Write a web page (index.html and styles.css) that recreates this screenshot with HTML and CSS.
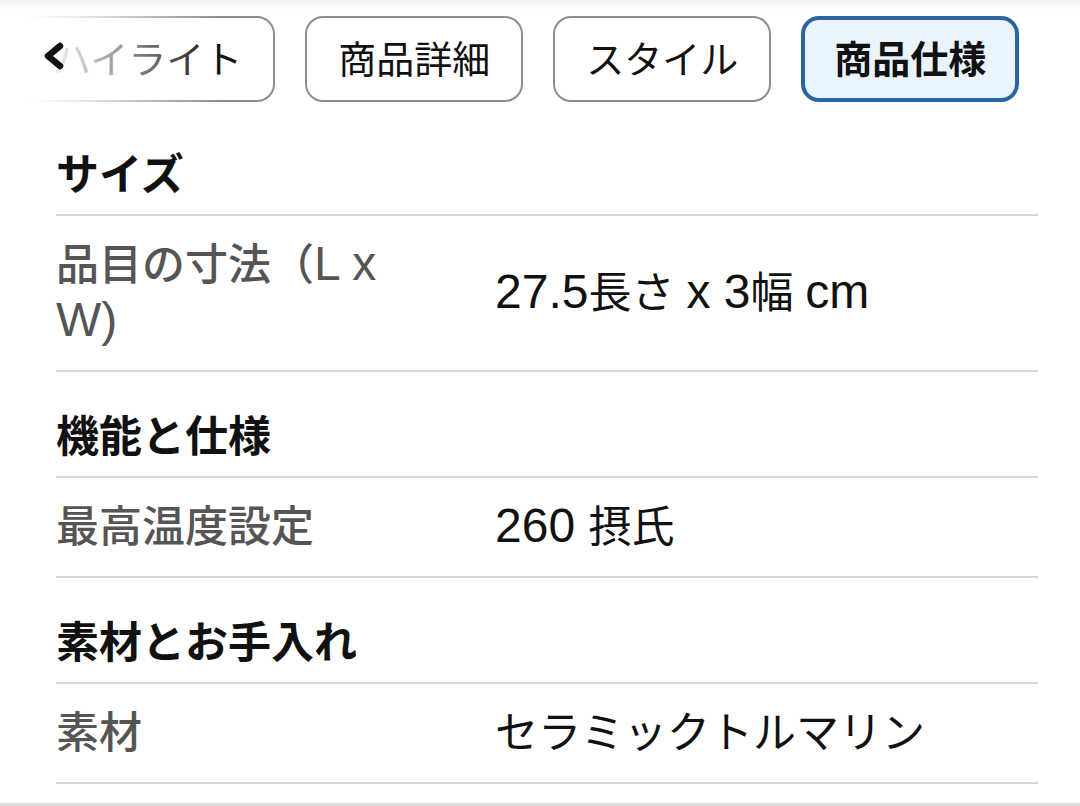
FILE: index.html
```html
<!DOCTYPE html>
<html lang="ja">
<head>
    <meta charset="UTF-8">
    <meta name="viewport" content="width=device-width, initial-scale=1.0">
    <title>商品仕様</title>
    <link rel="stylesheet" href="styles.css">
</head>
<body>

    <!-- Tab bar -->
    <div class="tab-bar">
        <div class="tabs">
            <a class="tab" href="#">ハイライト</a>
            <a class="tab" href="#">商品詳細</a>
            <a class="tab" href="#">スタイル</a>
            <a class="tab active" href="#">商品仕様</a>
        </div>
        <div class="fade-left">
            <svg class="chevron" width="22" height="30" viewBox="0 0 22 30">
                <polyline points="17,5 5,15 17,25" fill="none" stroke="#111" stroke-width="6.5" stroke-linecap="round" stroke-linejoin="round"/>
            </svg>
        </div>
    </div>

    <!-- Specs -->
    <div class="specs">
        <h3 class="spec-heading">サイズ</h3>
        <div class="spec-row">
            <div class="spec-label">品目の寸法（<span class="lat">L x</span> <span class="lat">W)</span></div>
            <div class="spec-value"><span class="lat">27.5</span>長さ <span class="lat">x 3</span>幅 <span class="lat">cm</span></div>
        </div>

        <h3 class="spec-heading">機能と仕様</h3>
        <div class="spec-row">
            <div class="spec-label">最高温度設定</div>
            <div class="spec-value"><span class="lat">260 </span>摂氏</div>
        </div>

        <h3 class="spec-heading">素材とお手入れ</h3>
        <div class="spec-row">
            <div class="spec-label">素材</div>
            <div class="spec-value">セラミックトルマリン</div>
        </div>
    </div>

    <div class="page-end"></div>

</body>
</html>
```

FILE: styles.css
```css
/* Reset */
* {
    margin: 0;
    padding: 0;
    box-sizing: border-box;
}

body {
    font-family: "Liberation Sans", "Noto Sans CJK JP", sans-serif;
    background: linear-gradient(#f1f1f1, #ffffff 10px);
    color: #111;
    overflow: hidden;
}

/* Tab bar */
.tab-bar {
    position: relative;
    margin-top: 16px;
    overflow: hidden;
}

.tabs {
    display: flex;
    gap: 30px;
    padding-left: 20px;
}

.tab {
    flex: none;
    display: flex;
    align-items: center;
    height: 86px;
    padding: 0 31px 6px;
    border: 2px solid #8e8e8e;
    border-radius: 18px;
    background-color: #fff;
    color: #111;
    font-family: "Noto Sans CJK JP", sans-serif;
    font-size: 38px;
    text-decoration: none;
}

.tab.active {
    padding: 0 29px 6px;
    border: 4px solid #2b65a1;
    background-color: #eaf4fd;
    font-weight: bold;
}

.fade-left {
    position: absolute;
    top: 0;
    left: 0;
    width: 230px;
    height: 100%;
    background: linear-gradient(to right, #fff 30px, rgba(255, 255, 255, 0.85) 70px, rgba(255, 255, 255, 0) 220px);
}

.chevron {
    position: absolute;
    left: 43px;
    top: 25px;
}

/* Specs */
.specs {
    margin: 0 42px 0 56px;
    padding-top: 8px;
}

.spec-heading {
    padding: 37px 0 11px;
    font-size: 43px;
    line-height: 56px;
    font-weight: bold;
    color: #111;
    border-bottom: 2px solid #d6d6d6;
}

.spec-row {
    display: grid;
    grid-template-columns: 360px 1fr;
    column-gap: 79px;
    align-items: center;
    padding: 21px 0;
    font-size: 43px;
    line-height: 56px;
    border-bottom: 2px solid #d6d6d6;
}

.spec-row .lat {
    font-size: 48px;
    line-height: 1;
}

.spec-label {
    color: #555;
    font-weight: 500;
}

.spec-value {
    color: #111;
}

.page-end {
    margin-top: 19px;
    border-top: 3px solid #dddddd;
}
```
